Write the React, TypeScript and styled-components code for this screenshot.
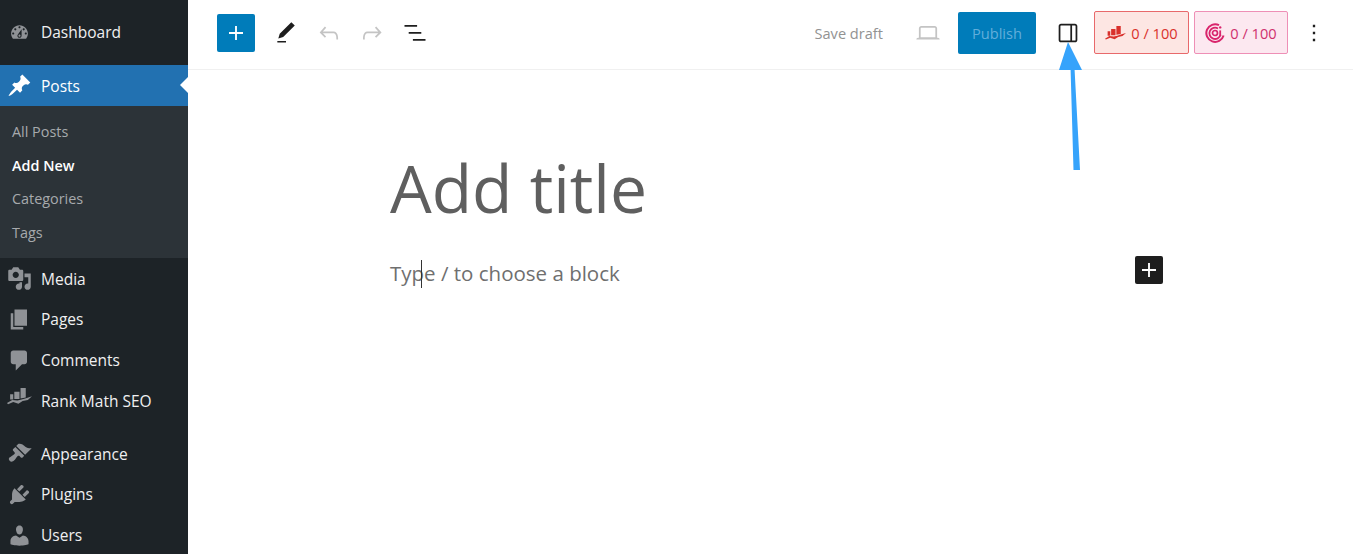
import styled, { createGlobalStyle } from 'styled-components'

const GlobalStyle = createGlobalStyle`
    html, body{
        margin: 0;
        padding: 0;
        background: #fff;
        font-family: "Open Sans", "Noto Sans", sans-serif;
    }
`

const Page = styled.div`
    display: flex;
    width: 1353px;
    height: 554px;
    overflow: hidden;
    position: relative;
`

/* SIDEBAR */
const Sidebar = styled.nav`
    flex: 0 0 188px;
    display: flex;
    flex-direction: column;
    background: #1d2327;
    padding-top: 12px;
`

const MenuItem = styled.div<{ $active?: boolean; $gapAfter?: number }>`
    position: relative;
    display: flex;
    align-items: center;
    flex: 0 0 40.7px;
    margin-bottom: ${p => p.$gapAfter ?? 0}px;
    background: ${p => (p.$active ? '#2271b1' : 'transparent')};
    color: ${p => (p.$active ? '#fff' : '#f0f0f1')};
    font-size: 15.5px;
    fill: ${p => (p.$active ? '#fff' : '#8f9296')};
`

const MenuIcon = styled.span<{ $size?: number }>`
    flex: 0 0 41px;
    display: flex;
    align-items: center;
    justify-content: center;
    padding-right: 2px;
    box-sizing: border-box;

    svg{
        width: ${p => p.$size ?? 25}px;
        height: ${p => p.$size ?? 25}px;
    }
`

const ActiveNotch = styled.span`
    position: absolute;
    right: 0;
    top: 12px;
    border: 8px solid transparent;
    border-right-color: #fff;
    border-left-width: 0;
`

const Submenu = styled.div`
    display: flex;
    flex-direction: column;
    flex: 0 0 152.4px;
    padding-top: 9px;
    box-sizing: border-box;
    background: #2c3338;
`

const SubItem = styled.div<{ $current?: boolean }>`
    flex: 0 0 33.6px;
    display: flex;
    align-items: center;
    padding-left: 12px;
    font-size: 14.4px;
    font-weight: ${p => (p.$current ? 600 : 400)};
    color: ${p => (p.$current ? '#fff' : '#a7aaad')};
`

/* MAIN */
const Main = styled.main`
    flex: 1;
    display: flex;
    flex-direction: column;
    min-width: 0;
`

const Toolbar = styled.header`
    flex: 0 0 70px;
    box-sizing: border-box;
    display: flex;
    align-items: center;
    justify-content: space-between;
    padding: 0 18px 4px 29px;
    border-bottom: 1px solid #f0f0f0;
`

const ToolGroup = styled.div`
    display: flex;
    align-items: center;
`

const InserterButton = styled.button`
    width: 38px;
    height: 38px;
    margin-right: 9px;
    padding: 0;
    display: flex;
    align-items: center;
    justify-content: center;
    border: 0;
    border-radius: 2px;
    background: #007cba;

    svg{
        width: 28px;
        height: 28px;
        fill: #fff;
    }
`

const IconButton = styled.div<{ $muted?: boolean; $ml?: number; $size?: number }>`
    width: 43px;
    height: 38px;
    display: flex;
    align-items: center;
    justify-content: center;
    margin-left: ${p => p.$ml ?? 0}px;

    svg{
        width: ${p => p.$size ?? 28}px;
        height: ${p => p.$size ?? 28}px;
        fill: ${p => (p.$muted ? '#c4c4c4' : '#1e1e1e')};
    }
`

const SaveDraft = styled.span`
    font-size: 14.6px;
    color: #929292;
    margin-right: 23px;
`

const PublishButton = styled.button`
    width: 78px;
    height: 42px;
    margin-left: 9px;
    padding: 0;
    border: 0;
    border-radius: 2px;
    background: #007cba;
    color: #62aedb;
    font-family: inherit;
    font-size: 14.6px;
`

const ScoreBadge = styled.div<{ $bg: string; $line: string; $ink: string; $ml: number; $w: number }>`
    width: ${p => p.$w}px;
    height: 43px;
    box-sizing: border-box;
    margin-left: ${p => p.$ml}px;
    display: flex;
    align-items: center;
    justify-content: center;
    gap: 5px;
    background: ${p => p.$bg};
    border: 1px solid ${p => p.$line};
    border-radius: 2px;
    color: ${p => p.$ink};
    font-size: 14.6px;

    svg{
        flex: none;
    }
`

const Canvas = styled.section`
    flex: 1;
    padding: 72px 0 0 202px;
`

const TitleLine = styled.h1`
    margin: 0;
    font-size: 66px;
    line-height: 90px;
    font-weight: 400;
    color: #5f5f5f;
`

const BlockRow = styled.div`
    width: 773px;
    margin-top: 25px;
    display: flex;
    align-items: flex-start;
    justify-content: space-between;
`

const Placeholder = styled.p`
    margin: 0;
    font-size: 20.5px;
    line-height: 32px;
    color: #6f6f6f;
`

const Caret = styled.span`
    display: inline-block;
    width: 1px;
    height: 28px;
    margin: 0 2px 0 -3px;
    vertical-align: -7px;
    background: #333;
`

const BlockAdd = styled.button`
    width: 28px;
    height: 28px;
    margin-top: -1px;
    padding: 0;
    display: flex;
    align-items: center;
    justify-content: center;
    border: 0;
    border-radius: 2px;
    background: #1e1e1e;

    svg{
        width: 28px;
        height: 28px;
        fill: #fff;
    }
`

const ArrowMark = styled.svg`
    position: absolute;
    left: 1050px;
    top: 36px;
    width: 40px;
    height: 140px;
`

const RANK_MARK = 'M3 6h3v5H3zM7 3.5h5v7H7zM13 0h5v9l-5 1zM0 14.5L5 11.5 10 12 14 11 19 9.5 24 8 20 11.5 15 12.5 11 15 6 13.5 1 15.5z'

const menuIcons: Record<string, string> = {
    dashboard: 'M3.76 16h12.48c1.1-1.37 1.76-3.11 1.76-5 0-4.42-3.58-8-8-8s-8 3.58-8 8c0 1.89.66 3.63 1.76 5zM10 4c.55 0 1 .45 1 1s-.45 1-1 1-1-.45-1-1 .45-1 1-1zM6 6c.55 0 1 .45 1 1s-.45 1-1 1-1-.45-1-1 .45-1 1-1zm8 0c.55 0 1 .45 1 1s-.45 1-1 1-1-.45-1-1 .45-1 1-1zm-5.37 5.55L12 7v6c0 1.1-.9 2-2 2s-2-.9-2-2c0-.57.24-1.08.63-1.45zM4 10c.55 0 1 .45 1 1s-.45 1-1 1-1-.45-1-1 .45-1 1-1zm12 0c.55 0 1 .45 1 1s-.45 1-1 1-1-.45-1-1 .45-1 1-1zm-5 3c0-.55-.45-1-1-1s-1 .45-1 1 .45 1 1 1 1-.45 1-1z',
    post: 'M10.44 3.02l1.82-1.82 6.36 6.35-1.83 1.82c-1.05-.68-2.48-.57-3.41.36l-.75.75c-.92.93-1.04 2.35-.35 3.41l-1.83 1.82-2.41-2.41-2.8 2.79c-.42.42-3.38 2.71-3.8 2.29s1.86-3.39 2.28-3.81l2.79-2.79L4.1 9.36l1.83-1.82c1.05.69 2.48.57 3.4-.36l.75-.75c.93-.92 1.05-2.35.36-3.41z',
    media: 'M13 11V4c0-.55-.45-1-1-1h-1.67L9 1H5L3.67 3H2c-.55 0-1 .45-1 1v7c0 .55.45 1 1 1h10c.55 0 1-.45 1-1zM7 4.5c1.38 0 2.5 1.12 2.5 2.5S8.38 9.5 7 9.5 4.5 8.38 4.5 7 5.62 4.5 7 4.5zM14 6h5v10.5c0 1.38-1.12 2.5-2.5 2.5S14 17.88 14 16.5s1.12-2.5 2.5-2.5c.17 0 .34.02.5.05V9h-3V6zm-4 8.05V13h2v3.5c0 1.38-1.12 2.5-2.5 2.5S7 17.88 7 16.5 8.12 14 9.5 14c.17 0 .34.02.5.05z',
    page: 'M6 15V2h10v13H6zm-1 1h8v2H3V5h2v11z',
    comments: 'M5 2h9c1.1 0 2 .9 2 2v7c0 1.1-.9 2-2 2h-2l-5 5v-5H5c-1.1 0-2-.9-2-2V4c0-1.1.9-2 2-2z',
    appearance: 'M14.48 11.06L7.41 3.99l1.5-1.5c.5-.56 2.3-.47 3.51.32 1.21.8 1.43 1.28 2.91 2.1 1.18.64 2.45 1.26 4.45.85zm-.71.71L6.7 4.7 4.93 6.47c-.39.39-.39 1.02 0 1.41l1.06 1.06c.39.39.39 1.03 0 1.42-.6.6-1.43 1.11-2.21 1.69-.35.26-.7.53-1.01.84C1.43 13.23.91 14.66 2.1 15.85s2.62.66 3.94-.57c.31-.31.58-.66.84-1.01.58-.78 1.09-1.61 1.69-2.21.39-.39 1.03-.39 1.42 0l1.06 1.06c.39.39 1.02.39 1.41 0z',
    plugins: 'M13.11 4.36L9.87 7.6 8 5.73l3.24-3.24c.35-.34 1.05-.2 1.56.32.52.51.66 1.21.31 1.55zm-8 1.77l.91-1.12 9.01 9.01-1.19.84c-.71.71-2.63 1.16-3.82 1.16H6.14L4.9 17.26c-.59.59-1.54.59-2.12 0-.59-.58-.59-1.53 0-2.12l1.24-1.24v-3.88c0-1.13.4-3.19 1.09-3.89zm7.26 3.97l3.24-3.24c.34-.35 1.04-.21 1.55.31.52.51.66 1.21.31 1.55l-3.24 3.25z',
    users: 'M10 9.25c-2.27 0-2.73-3.44-2.73-3.44C7 4.02 7.82 2 9.97 2c2.16 0 2.98 2.02 2.71 3.81 0 0-.41 3.44-2.68 3.44zm0 2.57L12.72 10c2.39 0 4.52 2.33 4.52 4.53v2.49s-3.65 1.13-7.24 1.13c-3.65 0-7.24-1.13-7.24-1.13v-2.49c0-2.25 1.94-4.48 4.47-4.48z',
}

const toolIcons = {
    plus: 'M18 11.2h-5.2V6h-1.6v5.2H6v1.6h5.2V18h1.6v-5.2H18z',
    pen: 'M20.1 5.1L16.9 2 6.2 12.7l-1.3 4.4 4.5-1.3L20.1 5.1zM4 20.8h8v-1.5H4v1.5z',
    undo: 'M18.3 11.7c-.6-.6-1.4-.9-2.3-.9H6.7l2.9-3.3-1.1-1-4.5 5L8.5 16l1-1-2.7-2.7H16c.5 0 .9.2 1.3.5 1 1 1 3.4 1 4.5v.3h1.5v-.2c0-1.5 0-4.3-1.5-5.7z',
    redo: 'M15.6 6.5l-1.1 1 2.9 3.3H8c-.9 0-1.7.3-2.3.9-1.4 1.5-1.4 4.2-1.4 5.6v.2h1.5v-.3c0-1.1 0-3.5 1-4.5.3-.3.7-.5 1.3-.5h9.2L14.5 15l1.1 1.1 4.6-4.6-4.6-5z',
    list: 'M13.8 5.2H3v1.5h10.8V5.2zm-3.6 12v1.5H21v-1.5H10.2zm7.2-6H6.6v1.5h10.8v-1.5z',
    laptop: 'M20.5 16h-.7V8c0-1.1-.9-2-2-2H6.2c-1.1 0-2 .9-2 2v8h-.7c-.8 0-1.5.7-1.5 1.5h20c0-.8-.7-1.5-1.5-1.5zM5.7 8c0-.3.2-.5.5-.5h11.6c.3 0 .5.2.5.5v7.6H5.7V8z',
    panel: 'M18 4H6c-1.1 0-2 .9-2 2v12c0 1.1.9 2 2 2h12c1.1 0 2-.9 2-2V6c0-1.1-.9-2-2-2zm-4 14.5H6c-.3 0-.5-.2-.5-.5V6c0-.3.2-.5.5-.5h8v13zm4.5-.5c0 .3-.2.5-.5.5h-2.5v-13H18c.3 0 .5.2.5.5v12z',
    more: 'M13 19h-2v-2h2v2zm0-6h-2v-2h2v2zm0-6h-2V5h2v2z',
}

const Glyph = ({ d, box = 24 }: { d: string; box?: number }) => (
    <svg viewBox={`0 0 ${box} ${box}`} aria-hidden="true">
        <path d={d} />
    </svg>
)

const menuTop = [
    { icon: 'media', label: 'Media' },
    { icon: 'page', label: 'Pages' },
    { icon: 'comments', label: 'Comments' },
    { icon: 'rank', label: 'Rank Math SEO', gap: 12.3 },
    { icon: 'appearance', label: 'Appearance' },
    { icon: 'plugins', label: 'Plugins' },
    { icon: 'users', label: 'Users' },
]

const App = () => {
    return (
        <Page>
            <GlobalStyle />
            <Sidebar>
                <MenuItem $gapAfter={12.6}>
                    <MenuIcon $size={21}><Glyph d={menuIcons.dashboard} box={20} /></MenuIcon>
                    Dashboard
                </MenuItem>
                <MenuItem $active>
                    <MenuIcon><Glyph d={menuIcons.post} box={20} /></MenuIcon>
                    Posts
                    <ActiveNotch />
                </MenuItem>
                <Submenu>
                    <SubItem>All Posts</SubItem>
                    <SubItem $current>Add New</SubItem>
                    <SubItem>Categories</SubItem>
                    <SubItem>Tags</SubItem>
                </Submenu>
                {menuTop.map(item => (
                    <MenuItem key={item.label} $gapAfter={item.gap}>
                        <MenuIcon>
                            {item.icon === 'rank'
                                ? <Glyph d={RANK_MARK} box={24} />
                                : <Glyph d={menuIcons[item.icon]} box={20} />}
                        </MenuIcon>
                        {item.label}
                    </MenuItem>
                ))}
            </Sidebar>
            <Main>
                <Toolbar>
                    <ToolGroup>
                        <InserterButton><Glyph d={toolIcons.plus} /></InserterButton>
                        <IconButton $size={26}><Glyph d={toolIcons.pen} /></IconButton>
                        <IconButton $muted><Glyph d={toolIcons.undo} /></IconButton>
                        <IconButton $muted><Glyph d={toolIcons.redo} /></IconButton>
                        <IconButton><Glyph d={toolIcons.list} /></IconButton>
                    </ToolGroup>
                    <ToolGroup>
                        <SaveDraft>Save draft</SaveDraft>
                        <IconButton $muted><Glyph d={toolIcons.laptop} /></IconButton>
                        <PublishButton>Publish</PublishButton>
                        <IconButton $ml={10}><Glyph d={toolIcons.panel} /></IconButton>
                        <ScoreBadge $bg="#fde6e3" $line="#e8696b" $ink="#d9302c" $ml={5} $w={95}>
                            <svg width="21" height="16" viewBox="0 0 24 16" fill="#d9302c" aria-hidden="true">
                                <path d={RANK_MARK} />
                            </svg>
                            0 / 100
                        </ScoreBadge>
                        <ScoreBadge $bg="#fce8f0" $line="#ee8fb6" $ink="#cf2f6d" $ml={5} $w={94}>
                            <svg width="20" height="20" viewBox="0 0 20 20" fill="none" stroke="#d9246c" aria-hidden="true">
                                <path d="M14 2.2A8.8 8.8 0 1 0 18.6 12.5" strokeWidth="2" />
                                <path d="M13 5.4a5.7 5.7 0 1 0 2.6 6.4" strokeWidth="1.8" />
                                <circle cx="10" cy="10" r="2.5" strokeWidth="1.7" />
                                <path d="M15.2 7.4v5.4" strokeWidth="1.8" />
                                <circle cx="15.2" cy="4.4" r="1.2" fill="#d9246c" stroke="none" />
                            </svg>
                            0 / 100
                        </ScoreBadge>
                        <IconButton $ml={4}><Glyph d={toolIcons.more} /></IconButton>
                    </ToolGroup>
                </Toolbar>
                <Canvas>
                    <TitleLine>Add title</TitleLine>
                    <BlockRow>
                        <Placeholder>Typ<Caret />e / to choose a block</Placeholder>
                        <BlockAdd><Glyph d={toolIcons.plus} /></BlockAdd>
                    </BlockRow>
                </Canvas>
            </Main>
            <ArrowMark viewBox="0 0 40 140" aria-hidden="true">
                <path d="M18 6L32 34H24.6L30 134H23.5L20.6 34H9z" fill="#36a3fb" />
            </ArrowMark>
        </Page>
    )
}

export default App
